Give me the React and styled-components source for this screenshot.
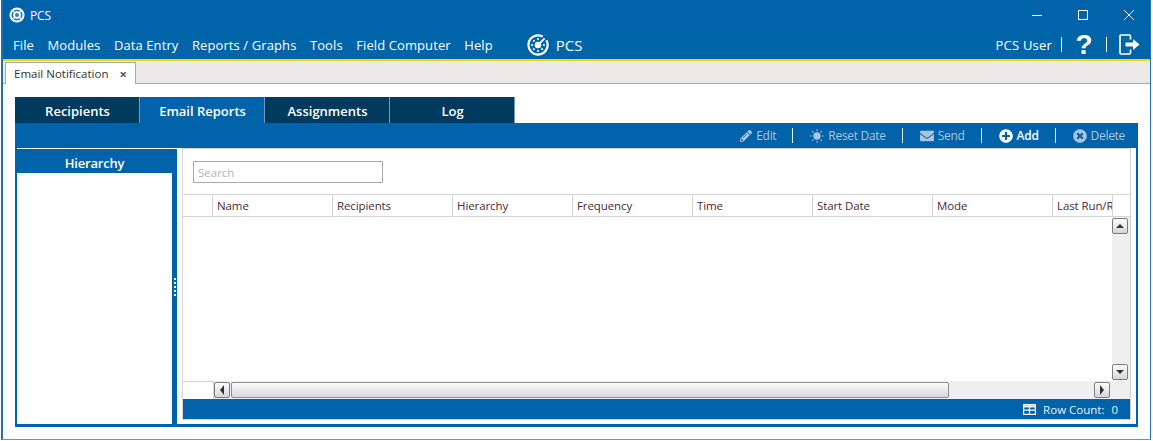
import styled, { createGlobalStyle } from 'styled-components';
import { FaPencilAlt, FaEnvelope, FaPlusCircle, FaTimesCircle } from 'react-icons/fa';

const Global = createGlobalStyle`
  html, body { margin: 0; padding: 0; background: #fff; }
  body { font-family: "Open Sans", "Noto Sans", sans-serif; }
`;

const menus = ['File', 'Modules', 'Data Entry', 'Reports / Graphs', 'Tools', 'Field Computer', 'Help'];
const tabs = ['Recipients', 'Email Reports', 'Assignments', 'Log'];
const columns = ['Name', 'Recipients', 'Hierarchy', 'Frequency', 'Time', 'Start Date', 'Mode', 'Last Run/Result'];

function TitleIcon() {
  return (
    <svg width="16" height="16" viewBox="0 0 16 16">
      <circle cx="8" cy="8" r="7.6" fill="#fff" />
      <circle cx="8" cy="8" r="5.6" fill="#2f7fbd" />
      <circle cx="8" cy="8" r="3.8" fill="#fff" />
      <circle cx="8" cy="8" r="2" fill="#2f7fbd" />
      <path d="M3 3l3 3M13 3l-3 3M3 13l3-3M13 13l-3-3" stroke="#e6f0f8" strokeWidth="1.3" />
    </svg>
  );
}

function WheelLogo() {
  return (
    <svg width="22" height="22" viewBox="0 0 20 20" fill="none" stroke="#fff">
      <path d="M14.3 2.4A8.7 8.7 0 1 0 17.6 5.7" strokeWidth="2" />
      <circle cx="10" cy="10" r="3" fill="#fff" stroke="none" />
      <path d="M11.5 8.5L16 4" strokeWidth="1.7" />
      <g fill="#fff" stroke="none">
        <rect x="9.2" y="3.8" width="1.6" height="1.6" />
        <rect x="9.2" y="14.6" width="1.6" height="1.6" />
        <rect x="3.8" y="9.2" width="1.6" height="1.6" />
        <rect x="14.6" y="9.2" width="1.6" height="1.6" />
        <rect x="5.4" y="5.4" width="1.6" height="1.6" />
        <rect x="5.4" y="13" width="1.6" height="1.6" />
        <rect x="13" y="13" width="1.6" height="1.6" />
      </g>
    </svg>
  );
}

function SunIcon() {
  return (
    <svg width="14" height="16" viewBox="0 0 16 16" fill="#a9c6e0" stroke="#a9c6e0">
      <circle cx="8" cy="8" r="4.2" stroke="none" />
      <path strokeWidth="1.3" d="M8 .4v1.8M8 13.8v1.8M.4 8h1.8M13.8 8h1.8M2.6 2.6l1.3 1.3M12.1 12.1l1.3 1.3M2.6 13.4l1.3-1.3M12.1 3.9l1.3-1.3" />
    </svg>
  );
}

function ExitIcon() {
  return (
    <svg width="21" height="21" viewBox="0 0 21 21" fill="none" stroke="#fff">
      <path strokeWidth="1.7" d="M11.5 5.5V2.2Q11.5 1 10.3 1H2.2Q1 1 1 2.2v16.6Q1 20 2.2 20h8.1q1.2 0 1.2-1.2v-3.3" />
      <path fill="#fff" stroke="none" d="M6.5 8.5h7.5V5L20.5 10.5 14 16v-3.5H6.5z" />
    </svg>
  );
}

function GridIcon() {
  return (
    <svg width="13" height="11" viewBox="0 0 13 11" fill="none" stroke="#fff" strokeWidth="1.2">
      <rect x=".6" y=".6" width="11.8" height="9.8" />
      <path strokeWidth="2" d="M.6 2.4h11.8" />
      <path d="M.6 6.2h11.8M6.5 1v9.4" />
    </svg>
  );
}

export default function App() {
  return (
    <Win>
      <Global />
      <TitleBar>
        <TitleLeft>
          <TitleIcon />
          <TitleText>PCS</TitleText>
        </TitleLeft>
        <Controls>
          <ControlBtn>
            <svg width="12" height="12" viewBox="0 0 12 12" stroke="#fff"><path d="M1 6.5h10" /></svg>
          </ControlBtn>
          <ControlBtn>
            <svg width="12" height="12" viewBox="0 0 12 12" fill="none" stroke="#fff"><rect x="1.5" y="1.5" width="9" height="9" /></svg>
          </ControlBtn>
          <ControlBtn>
            <svg width="12" height="12" viewBox="0 0 12 12" stroke="#fff"><path d="M1 1l10 10M11 1L1 11" /></svg>
          </ControlBtn>
        </Controls>
      </TitleBar>

      <MenuBar>
        <Menus>
          {menus.map((m) => <MenuItem key={m}>{m}</MenuItem>)}
        </Menus>
        <Brand>
          <WheelLogo />
          <BrandText>PCS</BrandText>
        </Brand>
        <UserArea>
          <UserName>PCS User</UserName>
          <Divider />
          <Help>?</Help>
          <Divider />
          <ExitWrap><ExitIcon /></ExitWrap>
        </UserArea>
      </MenuBar>

      <DocStrip>
        <DocTab>
          Email Notification
          <DocClose>×</DocClose>
        </DocTab>
      </DocStrip>

      <Content>
        <TabRow>
          {tabs.map((t) => <Tab key={t} $active={t === 'Email Reports'}>{t}</Tab>)}
        </TabRow>
        <Toolbar>
          <Tool><FaPencilAlt size={12} />Edit</Tool>
          <ToolSep />
          <Tool><SunIcon />Reset Date</Tool>
          <ToolSep />
          <Tool><FaEnvelope size={14} />Send</Tool>
          <ToolSep />
          <Tool $enabled><FaPlusCircle size={14} />Add</Tool>
          <ToolSep />
          <Tool><FaTimesCircle size={14} />Delete</Tool>
        </Toolbar>
        <Body>
          <Side>
            <SideHead>Hierarchy</SideHead>
          </Side>
          <Splitter>
            <Grip>{[0, 1, 2, 3, 4].map((i) => <i key={i} />)}</Grip>
          </Splitter>
          <Main>
            <Panel>
              <SearchRow>
                <Search placeholder="Search" />
              </SearchRow>
              <Table>
                <HeaderRow>
                  <SelectCol />
                  {columns.map((c) => <HeaderCell key={c}>{c}</HeaderCell>)}
                  <HeaderGap />
                </HeaderRow>
                <GridBody>
                  <Rows />
                  <VScroll>
                    <ScrollBtn $kind="up" />
                    <ScrollBtn $kind="down" />
                  </VScroll>
                </GridBody>
                <HScrollRow>
                  <HScrollCorner />
                  <HScroll>
                    <ScrollBtn $kind="left" />
                    <Thumb />
                    <ScrollBtn $kind="right" />
                  </HScroll>
                </HScrollRow>
              </Table>
              <Footer>
                <GridIcon />
                <span>Row Count:</span>
                <span>0</span>
              </Footer>
            </Panel>
          </Main>
        </Body>
      </Content>
    </Win>
  );
}

const Win = styled.div`
  width: 1150px;
  height: 440px;
  margin-left: 1px;
  display: flex;
  flex-direction: column;
  background: #fff;
  border-left: 2px solid #1f6fb2;
  border-right: 1px solid #1f6fb2;
  border-bottom: 1px solid #5f96c4;
  box-sizing: border-box;
  overflow: hidden;
`;

const TitleBar = styled.div`
  height: 30px;
  flex: none;
  margin: 0 -2px 0 -2px;
  padding-left: 8px;
  background: #0063aa;
  display: flex;
  align-items: center;
  justify-content: space-between;
  color: #fff;
`;

const TitleLeft = styled.div`
  display: flex;
  align-items: center;
  gap: 5px;
`;

const TitleText = styled.span`
  font-size: 12px;
  letter-spacing: -0.2px;
`;

const Controls = styled.div`
  display: flex;
  height: 30px;
`;

const ControlBtn = styled.div`
  width: 46px;
  display: flex;
  align-items: center;
  justify-content: center;
`;

const MenuBar = styled.div`
  height: 29px;
  flex: none;
  margin: 0 -1px 0 -2px;
  padding: 0 11px 0 12px;
  background: #0064a9;
  display: flex;
  align-items: center;
  color: #fff;
`;

const Menus = styled.div`
  display: flex;
  gap: 13.5px;
`;

const MenuItem = styled.span`
  font-size: 13px;
  letter-spacing: 0.1px;
`;

const Brand = styled.div`
  margin-left: 34px;
  display: flex;
  align-items: center;
  gap: 7px;
`;

const BrandText = styled.span`
  font-size: 15px;
`;

const UserArea = styled.div`
  margin-left: auto;
  display: flex;
  align-items: center;
`;

const UserName = styled.span`
  font-size: 13px;
  letter-spacing: 0.2px;
  margin-right: 9px;
`;

const Divider = styled.div`
  width: 1px;
  height: 15px;
  background: #fff;
`;

const Help = styled.span`
  width: 44px;
  text-align: center;
  font-size: 28px;
  line-height: 28px;
  font-weight: 700;
  font-family: "Liberation Sans", sans-serif;
`;

const ExitWrap = styled.div`
  display: flex;
  margin-left: 12px;
`;

const DocStrip = styled.div`
  height: 22px;
  flex: none;
  background: #ece9e8;
  border-top: 2px solid #f2d400;
  border-bottom: 1px solid #a9a9a9;
  margin: 0 -1px 0 -2px;
  padding-left: 4px;
  display: flex;
  align-items: flex-end;
`;

const DocTab = styled.div`
  width: 131px;
  height: 22px;
  margin-bottom: -1px;
  box-sizing: border-box;
  background: #fff;
  border: 1px solid #a9a9a9;
  border-bottom: none;
  padding-left: 8px;
  display: flex;
  align-items: center;
  font-size: 11.5px;
  color: #333;
`;

const DocClose = styled.span`
  margin-left: 11px;
  font-size: 13px;
  font-weight: 700;
  color: #555;
`;

const Content = styled.div`
  flex: 1;
  min-height: 0;
  padding: 13px 12px 12px 12px;
  display: flex;
  flex-direction: column;
  background: #fff;
`;

const TabRow = styled.div`
  display: flex;
  height: 26px;
  flex: none;
`;

const Tab = styled.div`
  width: 125px;
  box-sizing: border-box;
  padding: 1px 0 0 1px;
  display: flex;
  align-items: center;
  justify-content: center;
  border-right: 1px solid #6f9cbf;
  background: ${(p) => (p.$active ? '#0063aa' : '#003a5d')};
  color: #fff;
  font-size: 13px;
  font-weight: 600;
`;

const Toolbar = styled.div`
  height: 25px;
  flex: none;
  background: #0063aa;
  display: flex;
  align-items: center;
  justify-content: flex-end;
  padding-right: 13px;
`;

const Tool = styled.div`
  display: flex;
  align-items: center;
  gap: 4px;
  font-size: 12px;
  letter-spacing: -0.3px;
  font-weight: ${(p) => (p.$enabled ? 600 : 400)};
  color: ${(p) => (p.$enabled ? '#fff' : '#a9c6e0')};
`;

const ToolSep = styled.div`
  width: 1px;
  height: 15px;
  margin: 0 17px 0 16px;
  background: #e6eff6;
`;

const Body = styled.div`
  flex: 1;
  min-height: 0;
  display: flex;
  border: 2px solid #0063aa;
  border-top: none;
  border-bottom-width: 3px;
`;

const Side = styled.div`
  width: 155px;
  flex: none;
  border-top: 1px solid #fff;
  display: flex;
  flex-direction: column;
`;

const SideHead = styled.div`
  height: 24px;
  box-sizing: border-box;
  padding-top: 3px;
  background: #0063aa;
  color: #fff;
  font-size: 13px;
  font-weight: 600;
  letter-spacing: -0.2px;
  display: flex;
  align-items: center;
  justify-content: center;
`;

const Splitter = styled.div`
  width: 5px;
  flex: none;
  border-top: 1px solid #fff;
  background: #0063aa;
  display: flex;
  align-items: center;
  justify-content: center;
`;

const Grip = styled.div`
  display: flex;
  flex-direction: column;
  gap: 2px;
  i {
    display: block;
    width: 2px;
    height: 2px;
    background: #fff;
  }
`;

const Main = styled.div`
  flex: 1;
  min-width: 0;
  padding: 0 5px 4px 5px;
  display: flex;
`;

const Panel = styled.div`
  flex: 1;
  min-width: 0;
  border: 1px solid #d4d4d4;
  display: flex;
  flex-direction: column;
`;

const SearchRow = styled.div`
  height: 45px;
  flex: none;
  box-sizing: border-box;
  padding: 12px 0 0 10px;
`;

const Search = styled.input`
  display: block;
  width: 190px;
  height: 22px;
  box-sizing: border-box;
  border: 1px solid #ababab;
  padding: 0 4px;
  font-family: inherit;
  font-size: 11.5px;
  outline: none;
  &::placeholder {
    color: #b3b3b3;
    opacity: 1;
  }
`;

const Table = styled.div`
  flex: 1;
  min-height: 0;
  display: flex;
  flex-direction: column;
`;

const HeaderRow = styled.div`
  height: 23px;
  flex: none;
  box-sizing: border-box;
  display: flex;
  border-top: 1px solid #d4d4d4;
  border-bottom: 1px solid #d4d4d4;
`;

const SelectCol = styled.div`
  width: 30px;
  flex: none;
  border-right: 1px solid #d4d4d4;
  box-sizing: border-box;
`;

const HeaderCell = styled.div`
  width: 120px;
  flex: none;
  box-sizing: border-box;
  padding-left: 4px;
  border-right: 1px solid #d4d4d4;
  font-size: 11.5px;
  letter-spacing: -0.1px;
  line-height: 21px;
  color: #4a2a3a;
  white-space: nowrap;
  overflow: hidden;
  &:nth-child(9) {
    width: 60px;
  }
`;

const HeaderGap = styled.div`
  flex: 1;
`;

const GridBody = styled.div`
  flex: 1;
  min-height: 0;
  display: flex;
`;

const Rows = styled.div`
  flex: 1;
`;

const VScroll = styled.div`
  width: 18px;
  flex: none;
  background: #efefef;
  display: flex;
  flex-direction: column;
  justify-content: space-between;
  padding: 1px 0;
  align-items: flex-start;
`;

const arrows = {
  up: 'border-left: 4px solid transparent; border-right: 4px solid transparent; border-bottom: 4px solid #333;',
  down: 'border-left: 4px solid transparent; border-right: 4px solid transparent; border-top: 4px solid #333;',
  left: 'border-top: 5px solid transparent; border-bottom: 5px solid transparent; border-right: 4px solid #333;',
  right: 'border-top: 5px solid transparent; border-bottom: 5px solid transparent; border-left: 4px solid #333;',
};

const ScrollBtn = styled.div`
  width: 16px;
  height: 16px;
  flex: none;
  box-sizing: border-box;
  border: 1px solid #7d7d7d;
  border-radius: 2px;
  background: linear-gradient(#fdfdfd, #d6d6d6);
  display: flex;
  align-items: center;
  justify-content: center;
  &::after {
    content: "";
    width: 0;
    height: 0;
    ${(p) => arrows[p.$kind]}
  }
`;

const HScrollRow = styled.div`
  height: 18px;
  flex: none;
  display: flex;
`;

const HScrollCorner = styled.div`
  width: 31px;
  flex: none;
  box-sizing: border-box;
  border-top: 1px solid #d4d4d4;
  border-right: 1px solid #d4d4d4;
`;

const HScroll = styled.div`
  flex: 1;
  background: #efefef;
  padding: 1px 20px 1px 0;
  display: flex;
  align-items: center;
`;

const Thumb = styled.div`
  width: 718px;
  height: 16px;
  margin: 0 auto 0 1px;
  box-sizing: border-box;
  border: 1px solid #8f8f8f;
  border-radius: 2px;
  background: linear-gradient(#fbfbfb, #d8d8d8);
`;

const Footer = styled.div`
  height: 20px;
  flex: none;
  background: #0063aa;
  color: #e8f1f8;
  font-size: 11.5px;
  display: flex;
  align-items: center;
  justify-content: flex-end;
  gap: 7px;
  padding-right: 12px;
`;
